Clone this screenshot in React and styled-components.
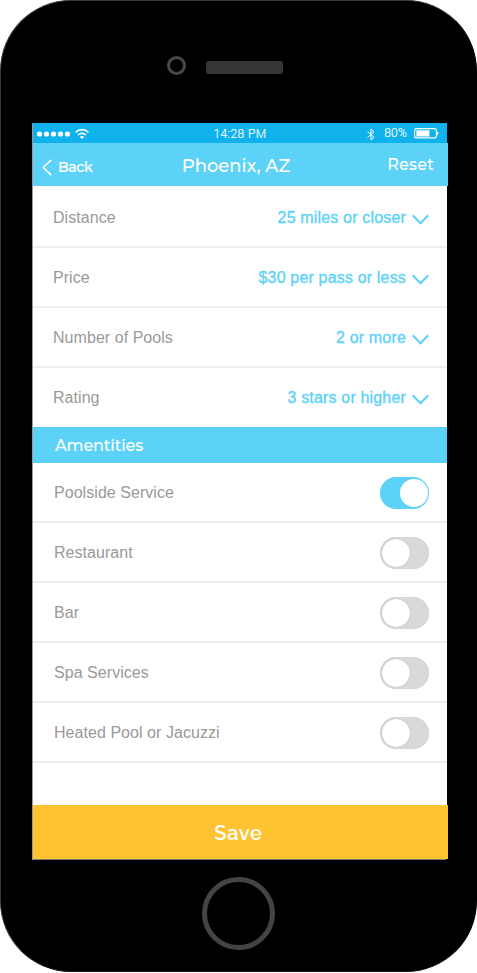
import React from "react";
import styled, { createGlobalStyle } from "styled-components";

const sky = "#5dd2f9";

const GlobalStyle = createGlobalStyle`
  * { box-sizing: border-box; }
  body { margin: 0; background: #fff; }
  button { appearance: none; border: 0; padding: 0; margin: 0; background: none; color: inherit; font: inherit; }
`;

const Phone = styled.div`
  width: 477px;
  height: 972px;
  background: #000;
  border: 1px solid #383838;
  border-right-color: #000;
  border-bottom-color: #161616;
  border-radius: 71px;
  overflow: hidden;
`;

const TopBezel = styled.div`
  height: 122px;
  padding: 55px 0 0 166px;
  display: flex;
  align-items: flex-start;
`;

const Camera = styled.div`
  width: 19px;
  height: 19px;
  border: 3px solid #484848;
  border-radius: 50%;
`;

const Speaker = styled.div`
  width: 77px;
  height: 13px;
  margin: 5px 0 0 20px;
  border-radius: 3px;
  background: #363636;
`;

const Screen = styled.main`
  width: 416px;
  height: 737px;
  margin-left: 31px;
  display: flex;
  flex-direction: column;
  border-left: 1px solid #999;
  font-family: "Liberation Sans", Arial, sans-serif;
`;

const StatusBar = styled.div`
  width: 414px;
  height: 20px;
  display: grid;
  grid-template-columns: 1fr auto 1fr;
  align-items: center;
  background: #0fb2ec;
  color: #fff;
  font: 12px/20px Roboto, sans-serif;
`;

const Signal = styled.div`
  display: flex;
  align-items: center;
  padding-left: 4px;
  gap: 4px;
`;

const Clock = styled.span`
  letter-spacing: 0.4px;
  font-weight: 300;
  padding-top: 1px;
  -webkit-text-stroke: 0.15px #fff;
`;

const Power = styled.div`
  display: flex;
  align-items: center;
  justify-content: flex-end;
  padding-right: 8px;
  svg { display: block; }
  svg:first-child { margin-top: 2px; }
  svg:last-child { margin-bottom: 1px; }
`;

const Percent = styled.span`
  margin: 0 7px 2px 9px;
  line-height: 18px;
  font-weight: 300;
  letter-spacing: 0.2px;
  -webkit-text-stroke: 0.15px #fff;
`;

const NavBar = styled.header`
  width: 415px;
  height: 43px;
  display: grid;
  grid-template-columns: 1fr auto 1fr;
  align-items: center;
  background: ${sky};
  color: #fff;
  font-family: Montserrat, Inter, sans-serif;
`;

const BackButton = styled.button`
  display: flex;
  align-items: center;
  gap: 6px;
  padding: 6px 0 0 9px;
  font-size: 14px;
  font-weight: 500;
  line-height: 18px;
  letter-spacing: -0.3px;
  white-space: nowrap;
  -webkit-text-stroke: 0.2px #fff;
  span { padding-bottom: 1px; }
`;

const Title = styled.h1`
  margin: 0 9px 0 0;
  padding-top: 3px;
  font-size: 18px;
  font-weight: 500;
  line-height: 22px;
  letter-spacing: -0.04px;
`;

const ResetButton = styled.button`
  justify-self: end;
  padding-right: 14px;
  font-size: 16px;
  font-weight: 500;
  line-height: 20px;
  letter-spacing: 0.2px;
`;

const List = styled.section`
  width: 414px;
  display: flex;
  flex-direction: column;
  background: #fff;
`;

const Row = styled.div`
  height: ${(p) => p.$height || 60}px;
  padding: ${(p) => (p.$first ? 2 : 0)}px 18px 0 ${(p) => p.$inset}px;
  display: flex;
  align-items: center;
  justify-content: space-between;
  border-bottom: ${(p) => (p.$last ? 0 : 2)}px solid #eee;
  font-size: 16px;
  line-height: 20px;
`;

const Label = styled.span`
  padding-top: ${(p) => (p.$last ? 0 : 2)}px;
  color: #999;
  letter-spacing: 0.05px;
  white-space: nowrap;
`;

const Picker = styled.button`
  display: flex;
  align-items: center;
  gap: 6px;
  color: ${sky};
  white-space: nowrap;
  -webkit-text-stroke: 0.35px ${sky};
  letter-spacing: 0.17px;
  svg { margin-top: 4px; }
`;

const Value = styled.span`
  padding-top: ${(p) => (p.$last ? 0 : 2)}px;
`;

const SectionTitle = styled.h2`
  width: 414px;
  height: 36px;
  margin: 0;
  padding-left: 22px;
  background: ${sky};
  color: #fff;
  font: 500 16px/37px Montserrat, Inter, sans-serif;
  letter-spacing: -0.12px;
`;

const Switch = styled.button`
  width: 49px;
  height: 32px;
  margin-top: 2px;
  padding: 2px ${(p) => (p.$on ? 1 : 2)}px;
  display: flex;
  justify-content: ${(p) => (p.$on ? "flex-end" : "flex-start")};
  border-radius: 16px;
  background: ${(p) => (p.$on ? sky : "#d9d9d9")};
  box-shadow: inset 0 0 1px ${(p) => (p.$on ? sky : "#bbb")};
`;

const Knob = styled.span`
  width: 28px;
  height: 28px;
  border-radius: 50%;
  background: #fff;
  box-shadow: 0 0 1px rgba(0, 0, 0, ${(p) => (p.$on ? 0 : 0.35)});
`;

const Spacer = styled.div`
  width: 414px;
  flex: 1;
  background: #fff;
`;

const SaveButton = styled.button`
  width: 415px;
  height: 54px;
  padding: 1px 4px 0 0;
  background: #ffc231;
  color: #fff;
  font: 600 20px/54px Raleway, Lato, sans-serif;
  letter-spacing: 0.7px;
`;

const ScreenEdge = styled.div`
  width: 413px;
  height: 1px;
  background: #777;
`;

const HomeArea = styled.div`
  padding: 17px 0 0 201px;
`;

const HomeButton = styled.div`
  width: 73px;
  height: 73px;
  border: 5px solid #444;
  border-radius: 50%;
`;

const filters = [
  { label: "Distance", value: "25 miles or closer" },
  { label: "Price", value: "$30 per pass or less" },
  { label: "Number of Pools", value: "2 or more" },
  { label: "Rating", value: "3 stars or higher" },
];

const amenities = [
  { label: "Poolside Service", on: true },
  { label: "Restaurant", on: false },
  { label: "Bar", on: false },
  { label: "Spa Services", on: false },
  { label: "Heated Pool or Jacuzzi", on: false },
];

const SignalDots = () => (
  <svg width="34" height="6" viewBox="0 0 34 6" fill="#fff">
    {[2.5, 9.5, 16.5, 23.5, 30.5].map((x) => (
      <circle key={x} cx={x} cy="3" r="2.6" />
    ))}
  </svg>
);

const Wifi = () => (
  <svg width="14" height="11" viewBox="0 0 14 11" fill="none" stroke="#fff" strokeWidth="1.7">
    <path d="M.6 4.4C4.2.8 9.8.8 13.4 4.4M3 7c2.3-2.2 5.7-2.2 8 0" />
    <path d="M4.8 8.9c1.3-1.1 3.1-1.1 4.4 0L7 11z" fill="#fff" stroke="none" />
  </svg>
);

const Bluetooth = () => (
  <svg width="8" height="13" viewBox="0 0 8 13" fill="none" stroke="#fff" strokeWidth="1">
    <path d="M.6 3.6 7 9.2 4 12V1l3 2.8L.6 9.4" />
  </svg>
);

const Battery = () => (
  <svg width="25" height="11" viewBox="0 0 25 11" fill="none">
    <rect x=".6" y=".6" width="21.8" height="9.3" rx="2" stroke="#fff" strokeWidth="1.1" />
    <path d="M2.4 2.2h13v6.2h-13z" fill="#fff" />
    <path d="M23.2 3.5c1.8.6 1.8 3.2 0 3.8z" fill="#fff" />
  </svg>
);

const BackChevron = () => (
  <svg width="10" height="17" viewBox="0 0 10 17" fill="none" stroke="#fff" strokeWidth="1.5">
    <path d="M9.3.9 1.2 8.5l8.1 7.6" />
  </svg>
);

const DownChevron = () => (
  <svg width="17" height="11" viewBox="0 0 17 11" fill="none" stroke={sky} strokeWidth="2.2">
    <path d="m.7 1.2 7.8 8 7.8-8" />
  </svg>
);

export default function App() {
  return (
    <>
      <GlobalStyle />
      <Phone>
        <TopBezel>
          <Camera />
          <Speaker />
        </TopBezel>
        <Screen>
          <StatusBar>
            <Signal>
              <SignalDots />
              <Wifi />
            </Signal>
            <Clock>14:28 PM</Clock>
            <Power>
              <Bluetooth />
              <Percent>80%</Percent>
              <Battery />
            </Power>
          </StatusBar>
          <NavBar>
            <BackButton>
              <BackChevron />
              <span>Back</span>
            </BackButton>
            <Title>Phoenix, AZ</Title>
            <ResetButton>Reset</ResetButton>
          </NavBar>
          <List>
            {filters.map((f, i) => {
              const last = i === filters.length - 1;
              return (
                <Row
                  key={f.label}
                  $inset={20}
                  $first={i === 0}
                  $last={last}
                  $height={i === 0 ? 62 : last ? 59 : 60}
                >
                  <Label $last={last}>{f.label}</Label>
                  <Picker>
                    <Value $last={last}>{f.value}</Value>
                    <DownChevron />
                  </Picker>
                </Row>
              );
            })}
          </List>
          <SectionTitle>Amentities</SectionTitle>
          <List>
            {amenities.map((a) => (
              <Row key={a.label} $inset={21}>
                <Label>{a.label}</Label>
                <Switch $on={a.on} role="switch" aria-checked={a.on} aria-label={a.label}>
                  <Knob $on={a.on} />
                </Switch>
              </Row>
            ))}
          </List>
          <Spacer />
          <SaveButton>Save</SaveButton>
          <ScreenEdge />
        </Screen>
        <HomeArea>
          <HomeButton />
        </HomeArea>
      </Phone>
    </>
  );
}
